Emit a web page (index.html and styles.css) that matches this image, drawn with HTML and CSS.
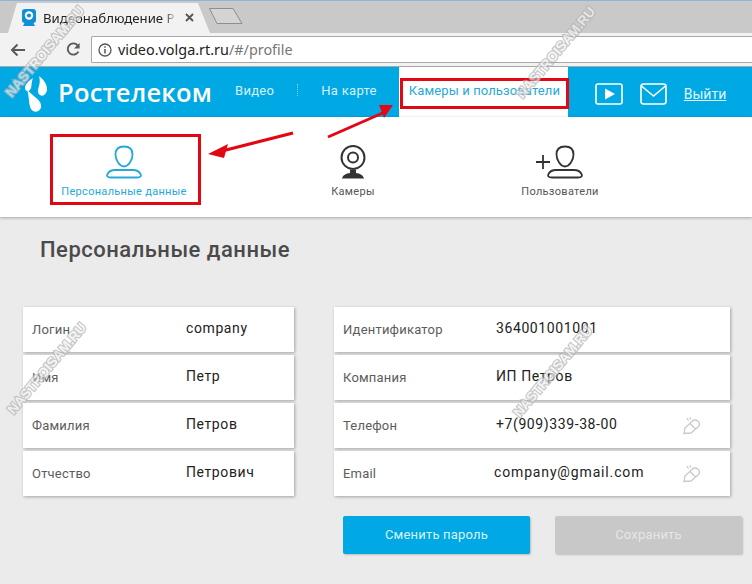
FILE: index.html
```html
<!DOCTYPE html>
<html lang="en">
<head>
    <meta charset="UTF-8">
    <meta name="viewport" content="width=device-width, initial-scale=1.0">
    <title>Видеонаблюдение</title>
    <link rel="stylesheet" href="styles.css">
</head>
<body>
    <div class="tabstrip">
        <div class="tab">
            <svg class="favicon" width="14" height="17" viewBox="0 0 14 17">
                <rect x="0" y="0" width="14" height="14" rx="3" fill="#0f8fd8"/>
                <circle cx="7" cy="6.5" r="4.2" fill="#fff"/>
                <circle cx="7" cy="6.5" r="2.1" fill="#0f8fd8"/>
                <path d="M1 17 L3 13 H11 L13 17 Z" fill="#0f8fd8"/>
            </svg>
            <span class="tab-title">Видеонаблюдение Р</span>
            <svg class="tab-close" width="9" height="9" viewBox="0 0 9 9">
                <path d="M1 1 L8 8 M8 1 L1 8" stroke="#555" stroke-width="1.8"/>
            </svg>
        </div>
        <svg class="newtab" width="36" height="18" viewBox="0 0 36 18">
            <path d="M1.5 1.5 H25 L34 16.5 H9 Z" fill="#d4d4d4" stroke="#8e8e8e"/>
        </svg>
    </div>

    <div class="toolbar">
        <svg class="tool-icon back" width="15" height="14" viewBox="0 0 15 14">
            <path d="M15 7 H2 M7.5 1.5 L2 7 L7.5 12.5" fill="none" stroke="#5a5a5a" stroke-width="2"/>
        </svg>
        <svg class="tool-icon reload" width="15" height="15" viewBox="0 0 16 16">
            <path d="M13.2 10.2 A6 6 0 1 1 12.4 3.6" fill="none" stroke="#5a5a5a" stroke-width="2"/>
            <path d="M14.5 1 V7 H8.5 Z" fill="#5a5a5a"/>
        </svg>
        <div class="omnibox">
            <svg width="14" height="14" viewBox="0 0 14 14">
                <circle cx="7" cy="7" r="6" fill="none" stroke="#555" stroke-width="1.3"/>
                <path d="M7 6 V10.5 M7 3.2 V4.8" stroke="#555" stroke-width="1.5"/>
            </svg>
            <span class="url">video.volga.rt.ru<span class="url-path">/#/profile</span></span>
        </div>
    </div>

    <header class="site-header">
        <svg class="logo-mark" width="24" height="38" viewBox="0 0 24 38">
            <path d="M15 1 C20 5 23 9 23 14 C23 19 19 22 16 20 C13 18 14 14 15 11 C16 8 16 4 15 1 Z" fill="#fff"/>
            <path d="M9 3 C4 6 1 10 1 13 C1 16 4 17 6 15 C8 13 7 8 9 3 Z" fill="#fff"/>
            <path d="M3 14 C6 20 16 23 17 30 C18 35 13 38 9 36 C4 33 6 24 3 14 Z" fill="#fff"/>
        </svg>
        <span class="logo-text">Ростелеком</span>
        <nav class="main-nav">
            <a class="nav-link nav-video">Видео</a>
            <span class="nav-sep"></span>
            <a class="nav-link nav-map">На карте</a>
            <a class="nav-link nav-active">Камеры и пользователи</a>
        </nav>
        <div class="header-tools">
            <svg width="28" height="22" viewBox="0 0 28 22">
                <rect x="1" y="1" width="26" height="20" rx="2" fill="none" stroke="#fff" stroke-width="1.6"/>
                <path d="M10 5.5 L20 11 L10 16.5 Z" fill="#fff"/>
            </svg>
            <svg class="mail" width="27" height="22" viewBox="0 0 27 22">
                <rect x="1" y="1" width="25" height="20" rx="2.5" fill="none" stroke="#fff" stroke-width="1.6"/>
                <path d="M1.5 3 L13.5 13 L25.5 3" fill="none" stroke="#fff" stroke-width="1.6"/>
            </svg>
            <a class="logout">Выйти</a>
        </div>
    </header>

    <div class="subnav">
        <div class="subnav-item sub-personal is-active">
            <svg width="38" height="34" viewBox="0 0 38 34">
                <path d="M19 1.5 C25 1.5 27.5 5 27.5 9.5 C27.5 15 23.5 21.5 19 21.5 C14.5 21.5 10.5 15 10.5 9.5 C10.5 5 13 1.5 19 1.5 Z M6 32.5 H32 C36 32.5 36.5 31 35.5 29 C34 26 31 25 28 25 H10 C7 25 4 26 2.5 29 C1.5 31 2 32.5 6 32.5 Z" fill="none" stroke="#27a9d8" stroke-width="1.8"/>
            </svg>
            <span>Персональные данные</span>
        </div>
        <div class="subnav-item sub-cameras">
            <svg width="28" height="34" viewBox="0 0 28 34">
                <circle cx="14" cy="12.5" r="11.5" fill="none" stroke="#333" stroke-width="2"/>
                <circle cx="14" cy="12.5" r="5" fill="none" stroke="#333" stroke-width="2"/>
                <path d="M11 25 H17 V28 C21 28.5 24 30 25 33.5 H3 C4 30 7 28.5 11 28 Z" fill="#333"/>
            </svg>
            <span>Камеры</span>
        </div>
        <div class="subnav-item sub-users">
            <svg width="48" height="34" viewBox="0 0 48 34">
                <path d="M29 1.5 C35 1.5 37.5 5 37.5 9.5 C37.5 15 33.5 21.5 29 21.5 C24.5 21.5 20.5 15 20.5 9.5 C20.5 5 23 1.5 29 1.5 Z M16 32.5 H42 C46 32.5 46.5 31 45.5 29 C44 26 41 25 38 25 H20 C17 25 14 26 12.5 29 C11.5 31 12 32.5 16 32.5 Z" fill="none" stroke="#333" stroke-width="1.8"/>
                <path d="M0 17 H14 M7 10 V24" stroke="#333" stroke-width="1.8"/>
            </svg>
            <span>Пользователи</span>
        </div>
    </div>

    <main class="content">
        <h1 class="page-title">Персональные данные</h1>
        <div class="columns">
            <div class="field-list field-list-left">
                <div class="field"><span class="field-label">Логин</span><span class="field-value">company</span></div>
                <div class="field"><span class="field-label">Имя</span><span class="field-value">Петр</span></div>
                <div class="field"><span class="field-label">Фамилия</span><span class="field-value">Петров</span></div>
                <div class="field"><span class="field-label">Отчество</span><span class="field-value">Петрович</span></div>
            </div>
            <div class="right-col">
                <div class="field-list field-list-right">
                    <div class="field"><span class="field-label">Идентификатор</span><span class="field-value">364001001001</span></div>
                    <div class="field"><span class="field-label">Компания</span><span class="field-value">ИП Петров</span></div>
                    <div class="field">
                        <span class="field-label">Телефон</span><span class="field-value">+7(909)339-38-00</span>
                        <svg class="edit" width="18" height="18" viewBox="0 0 18 18">
                            <path d="M1 16.5 L2 11 L9.5 4 C11 2.7 13 2.7 15 4.3 C17 6 17 8 15.5 9.5 L8 16 Z M7 6.5 L12.5 12 M4 1 L5.5 3.5 M7 0.5 L8 2.5" fill="none" stroke="#c8c8c8" stroke-width="1.3"/>
                        </svg>
                    </div>
                    <div class="field">
                        <span class="field-label">Email</span><span class="field-value value-email">company@gmail.com</span>
                        <svg class="edit" width="18" height="18" viewBox="0 0 18 18">
                            <path d="M1 16.5 L2 11 L9.5 4 C11 2.7 13 2.7 15 4.3 C17 6 17 8 15.5 9.5 L8 16 Z M7 6.5 L12.5 12 M4 1 L5.5 3.5 M7 0.5 L8 2.5" fill="none" stroke="#c8c8c8" stroke-width="1.3"/>
                        </svg>
                    </div>
                </div>
                <div class="buttons">
                    <button class="btn btn-primary">Сменить пароль</button>
                    <button class="btn btn-disabled">Сохранить</button>
                </div>
            </div>
        </div>
    </main>

    <!-- red marks drawn over the screenshot -->
    <div class="mark mark-nav"></div>
    <div class="mark mark-personal"></div>
    <svg class="arrows" width="752" height="584" viewBox="0 0 752 584">
        <path d="M293 133 L222 151" stroke="#e30613" stroke-width="3" fill="none"/>
        <path d="M208 154 L228 144 L224 158 Z" fill="#e30613"/>
        <path d="M328 137 L385 112" stroke="#e30613" stroke-width="3" fill="none"/>
        <path d="M393 105 L379 105 L384 118 Z" fill="#e30613"/>
    </svg>

    <span class="wm wm-1">NASTROISAM.RU</span>
    <span class="wm wm-2">NASTROISAM.RU</span>
    <span class="wm wm-3">NASTROISAM.RU</span>
    <span class="wm wm-4">NASTROISAM.RU</span>
</body>
</html>
```

FILE: styles.css
```css
html, body {
    margin: 0;
    padding: 0;
}
body {
    position: relative;
    width: 752px;
    height: 584px;
    overflow: hidden;
    background: #ebebeb;
    font-family: "Roboto", "Liberation Sans", sans-serif;
    color: #444;
}

/* browser chrome */
.tabstrip {
    display: flex;
    align-items: flex-end;
    height: 32px;
    background: #c9c9c9;
    border-top: 1px solid #8fb4dc;
    box-sizing: content-box;
}
.tab {
    display: flex;
    align-items: center;
    width: 202px;
    height: 30px;
    margin-left: 8px;
    padding: 0 0 1px 14px;
    box-sizing: border-box;
    background: #f2f2f2;
    clip-path: polygon(0 100%, 9px 0, 190px 0, 100% 100%);
}
.favicon {
    margin-right: 7px;
    flex: none;
}
.tab-title {
    width: 134px;
    white-space: nowrap;
    font-family: "Noto Sans", sans-serif;
    font-size: 13.2px;
    color: #222;
    -webkit-mask-image: linear-gradient(to right, #000 90%, transparent 100%);
    mask-image: linear-gradient(to right, #000 90%, transparent 100%);
}
.tab-close {
    margin-left: 8px;
}
.newtab {
    margin: 0 0 8px -2px;
}
.toolbar {
    display: flex;
    align-items: center;
    height: 34px;
    background: #f2f2f2;
    border-bottom: 1px solid #a8a8a8;
    box-sizing: border-box;
}
.tool-icon.back {
    margin-left: 10px;
}
.tool-icon.reload {
    margin-left: 41px;
}
.omnibox {
    flex: 1;
    display: flex;
    align-items: center;
    height: 27px;
    margin-left: 10px;
    padding-left: 6px;
    background: #fff;
    border: 1px solid #a8a8a8;
    border-right: none;
    border-radius: 2px 0 0 2px;
    box-sizing: border-box;
}
.url {
    margin-left: 6px;
    font-family: "Noto Sans", sans-serif;
    font-size: 14.4px;
    color: #222;
}
.url-path {
    color: #777;
}

/* site header */
.site-header {
    display: flex;
    align-items: center;
    height: 50px;
    background: #00a8e4;
}
.logo-mark {
    margin-left: 24px;
    margin-top: 3px;
    flex: none;
}
.logo-text {
    width: 154px;
    margin-left: 10px;
    font-family: "Open Sans", sans-serif;
    font-size: 25.5px;
    font-weight: 600;
    letter-spacing: 0.2px;
    color: #fff;
    white-space: nowrap;
}
.main-nav {
    display: flex;
    align-items: stretch;
    align-self: stretch;
    margin-left: 23px;
}
.nav-link {
    display: flex;
    align-items: center;
    padding-bottom: 4px;
    font-size: 13px;
    letter-spacing: 0.3px;
    color: #d6f1fb;
    white-space: nowrap;
}
.nav-sep {
    align-self: center;
    height: 12px;
    margin: 0 23px 4px 23px;
    border-left: 1px dotted #7fd3f1;
}
.nav-active {
    width: 169px;
    margin-left: 22px;
    padding-left: 10px;
    box-sizing: border-box;
    background: #fff;
    color: #27a9d8;
    letter-spacing: 0.12px;
}
.header-tools {
    display: flex;
    align-items: center;
    margin-left: 27px;
    padding-top: 3px;
}
.mail {
    margin-left: 17px;
}
.logout {
    margin-left: 17px;
    font-size: 14px;
    letter-spacing: 0;
    color: #e0f5fc;
    text-decoration: underline;
}

/* icon row */
.subnav {
    position: relative;
    display: grid;
    grid-template-columns: 248px 210px 204px;
    height: 100px;
    padding-top: 28px;
    box-sizing: border-box;
    background: #fff;
    box-shadow: 0 1px 3px rgba(0, 0, 0, 0.3);
}
.subnav-item {
    display: flex;
    flex-direction: column;
    align-items: center;
    gap: 6px;
    font-size: 11px;
    letter-spacing: 0.3px;
    color: #555;
}
.subnav-item.is-active {
    color: #27a9d8;
}

/* content */
.page-title {
    margin: 0;
    padding: 20px 0 0 40px;
    height: 90px;
    box-sizing: border-box;
    font-size: 22px;
    font-weight: 500;
    letter-spacing: 0.5px;
    color: #4a4a4a;
}
.columns {
    display: flex;
    align-items: flex-start;
    padding-left: 23px;
}
.field-list {
    display: flex;
    flex-direction: column;
    gap: 3px;
}
.field-list-left {
    width: 271px;
}
.field-list-right {
    width: 396px;
}
.right-col {
    margin-left: 40px;
}
.field {
    display: flex;
    align-items: center;
    height: 45px;
    padding-left: 9px;
    box-sizing: border-box;
    background: #fff;
    box-shadow: 1px 1px 3px rgba(0, 0, 0, 0.3);
}
.field-label {
    flex: none;
    font-size: 13px;
    letter-spacing: 0.2px;
    color: #5c5c5c;
}
.field-list-left .field-label {
    width: 154px;
}
.field-list-right .field-label {
    width: 153px;
}
.field-value {
    padding-bottom: 3px;
    font-size: 14px;
    letter-spacing: 0.6px;
    color: #222;
}
.value-email {
    margin-left: -2px;
    letter-spacing: 0.85px;
}
.edit {
    margin-left: auto;
    margin-right: 29px;
}
.buttons {
    display: flex;
    gap: 25px;
    margin: 20px 0 0 9px;
}
.btn {
    width: 187px;
    height: 38px;
    padding: 0 0 2px;
    border: none;
    border-radius: 2px;
    font-family: inherit;
    font-size: 13px;
    letter-spacing: 0.2px;
    box-shadow: 1px 1px 2px rgba(0, 0, 0, 0.2);
}
.btn-primary {
    background: #00a8e4;
    color: #d9f3fc;
}
.btn-disabled {
    background: #c8c8c8;
    color: #e6e6e6;
}

/* annotations on top */
.mark {
    position: absolute;
    border: 3px solid #e30613;
    box-sizing: border-box;
}
.mark-nav {
    left: 400px;
    top: 78px;
    width: 169px;
    height: 31px;
}
.mark-personal {
    left: 50px;
    top: 134px;
    width: 151px;
    height: 71px;
}
.arrows {
    position: absolute;
    left: 0;
    top: 0;
}
.wm {
    position: absolute;
    width: 130px;
    margin: -8px 0 0 -65px;
    text-align: center;
    font-family: "Liberation Sans", sans-serif;
    font-size: 13.5px;
    font-weight: 700;
    color: #f2f2f2;
    white-space: nowrap;
    -webkit-text-stroke: 2.5px #b4b4b4;
    paint-order: stroke fill;
    opacity: 0.7;
    transform: rotate(-50deg);
}
.wm-1 { left: 45px; top: 52px; }
.wm-2 { left: 556px; top: 53px; }
.wm-3 { left: 47px; top: 369px; }
.wm-4 { left: 553px; top: 372px; }
```
